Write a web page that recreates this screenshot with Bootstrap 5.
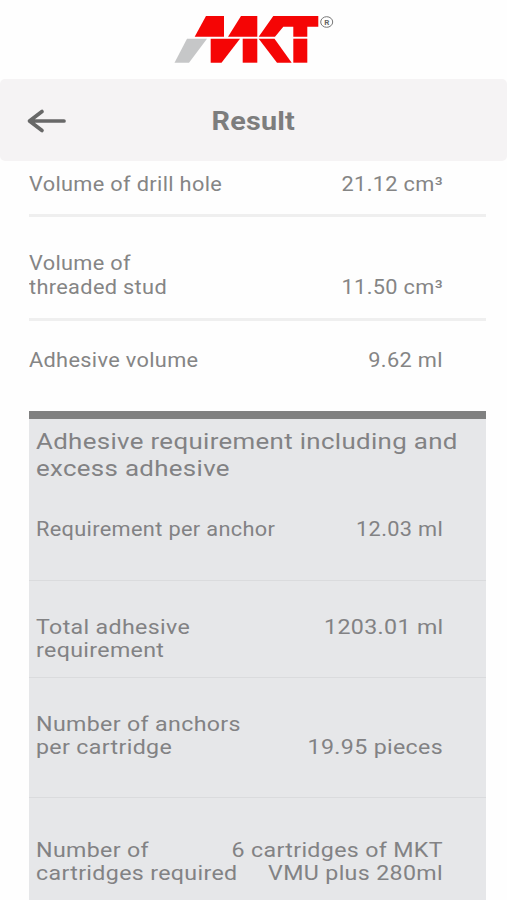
<!DOCTYPE html>
<html lang="en">
<head>
<meta charset="utf-8">
<meta name="viewport" content="width=device-width, initial-scale=1">
<title>Result</title>
<link href="https://cdn.jsdelivr.net/npm/bootstrap@5.3.0/dist/css/bootstrap.min.css" rel="stylesheet">
<style>
body { font-family: Roboto, "Liberation Sans", sans-serif; color: #858585; font-size: 19.5px; line-height: 23.5px; background: #fefefe; height: 900px; }
.brand-area { height: 79px; }
.title-bar { height: 82px; background: #f5f3f4; border-radius: 5px; }
.title-bar h1 { font-size: 25px; line-height: 30px; color: #7d7d7d; padding-top: 4px; }
.side { width: 66px; padding-top: 2px; }
.results { margin: 0 21px 0 29px; }
.result-row { padding-right: 43px; }
.line { border-bottom: 3px solid #efefef; }
/* wide lettering */
.wide { display: inline-block; white-space: nowrap; transform: scaleX(1.115); transform-origin: left center; letter-spacing: .3px; }
.panel h2 .wide { transform: scaleX(1.148); }
.r-total .wide, .r-number .wide, .r-required .wide { transform: scaleX(1.188); }
.value .wide { transform-origin: right center; text-align: right; margin-right: -.3px; }
.title-bar .wide { transform: scaleX(1.15); transform-origin: center; letter-spacing: .2px; }
.r-hole { height: 56px; padding-top: 11.5px; }
.r-stud { height: 104px; padding-top: 35px; }
.r-volume { height: 90px; padding-top: 28px; }
.r-stud .value { padding-top: 24px; }
.panel { background: #e6e7e9; border-top: 8px solid #808080; height: 489px; color: #828284; }
.panel .result-row { padding-left: 7px; border-bottom: 1px solid #dadbdd; }
.panel h2 { font-size: 22.5px; line-height: 26.5px; padding: 9px 0 0 7px; height: 62px; }
.r-anchor { height: 100px; padding-top: 37px; }
.r-total { height: 97px; padding-top: 34.5px; }
.r-number { height: 120px; padding-top: 34.5px; }
.r-number .value { padding-top: 23.5px; }
.panel .r-required { height: 102px; padding-top: 40.5px; border: 0; }
</style>
</head>
<body class="overflow-hidden">
<header class="brand-area">
<svg class="d-block" width="507" height="79" viewBox="0 0 507 79" role="img" aria-label="MKT">
  <path fill="#c6c7c8" d="M187 38.700H207L189 62.700H174.500Z"/>
  <g fill="#f50505">
    <path d="M206 16H224V36.700H194.700Z"/>
    <path d="M241 16H257.300V36.700H228Z"/>
    <path d="M210.700 38.700H240L221.500 62.700H210.700Z"/>
    <path d="M242.700 38.700H257.300V62.700H242.700Z"/>
    <path d="M273.300 16H318.300V26.700H307.300V36.700H293.300V26.700H283.300L275 36.700H258.700Z"/>
    <path d="M258.700 38.700H274.500L291.700 62.700H277Z"/>
    <path d="M293.300 38.700H307.300V62.700H293.300Z"/>
  </g>
  <ellipse cx="326.700" cy="22" rx="6" ry="5.300" fill="none" stroke="#777"/>
  <text x="326.700" y="24.800" font-size="8" font-weight="700" text-anchor="middle" fill="#666">R</text>
</svg>
</header>
<div class="title-bar d-flex align-items-center">
  <div class="side ps-4"><svg class="d-block" width="44" height="30" viewBox="24 106 44 30" fill="none" stroke="#686868" stroke-width="3.700" stroke-linecap="round" stroke-linejoin="round" role="img" aria-label="Back"><path d="M42 111.500L29.500 121L42 130.500M29.500 121H64"/></svg></div>
  <h1 class="flex-grow-1 text-center fw-bold m-0"><span class="wide">Result</span></h1>
  <div class="side"></div>
</div>
<main class="results">
  <div class="result-row line r-hole d-flex justify-content-between"><div><span class="wide">Volume of drill hole</span></div><div class="value"><span class="wide">21.12 cm³</span></div></div>
  <div class="result-row line r-stud d-flex justify-content-between"><div><span class="wide">Volume of<br>threaded stud</span></div><div class="value"><span class="wide">11.50 cm³</span></div></div>
  <div class="result-row r-volume d-flex justify-content-between"><div><span class="wide">Adhesive volume</span></div><div class="value"><span class="wide">9.62 ml</span></div></div>
  <section class="panel">
    <h2 class="fw-normal m-0"><span class="wide">Adhesive requirement including and<br>excess adhesive</span></h2>
    <div class="result-row r-anchor d-flex justify-content-between"><div><span class="wide">Requirement per anchor</span></div><div class="value"><span class="wide">12.03 ml</span></div></div>
    <div class="result-row r-total d-flex justify-content-between"><div><span class="wide">Total adhesive<br>requirement</span></div><div class="value"><span class="wide">1203.01 ml</span></div></div>
    <div class="result-row r-number d-flex justify-content-between"><div><span class="wide">Number of anchors<br>per cartridge</span></div><div class="value"><span class="wide">19.95 pieces</span></div></div>
    <div class="result-row r-required d-flex justify-content-between"><div><span class="wide">Number of<br>cartridges required</span></div><div class="value"><span class="wide">6 cartridges of MKT<br>VMU plus 280ml</span></div></div>
  </section>
</main>
<script src="https://cdn.jsdelivr.net/npm/bootstrap@5.3.0/dist/js/bootstrap.bundle.min.js"></script>
</body>
</html>
